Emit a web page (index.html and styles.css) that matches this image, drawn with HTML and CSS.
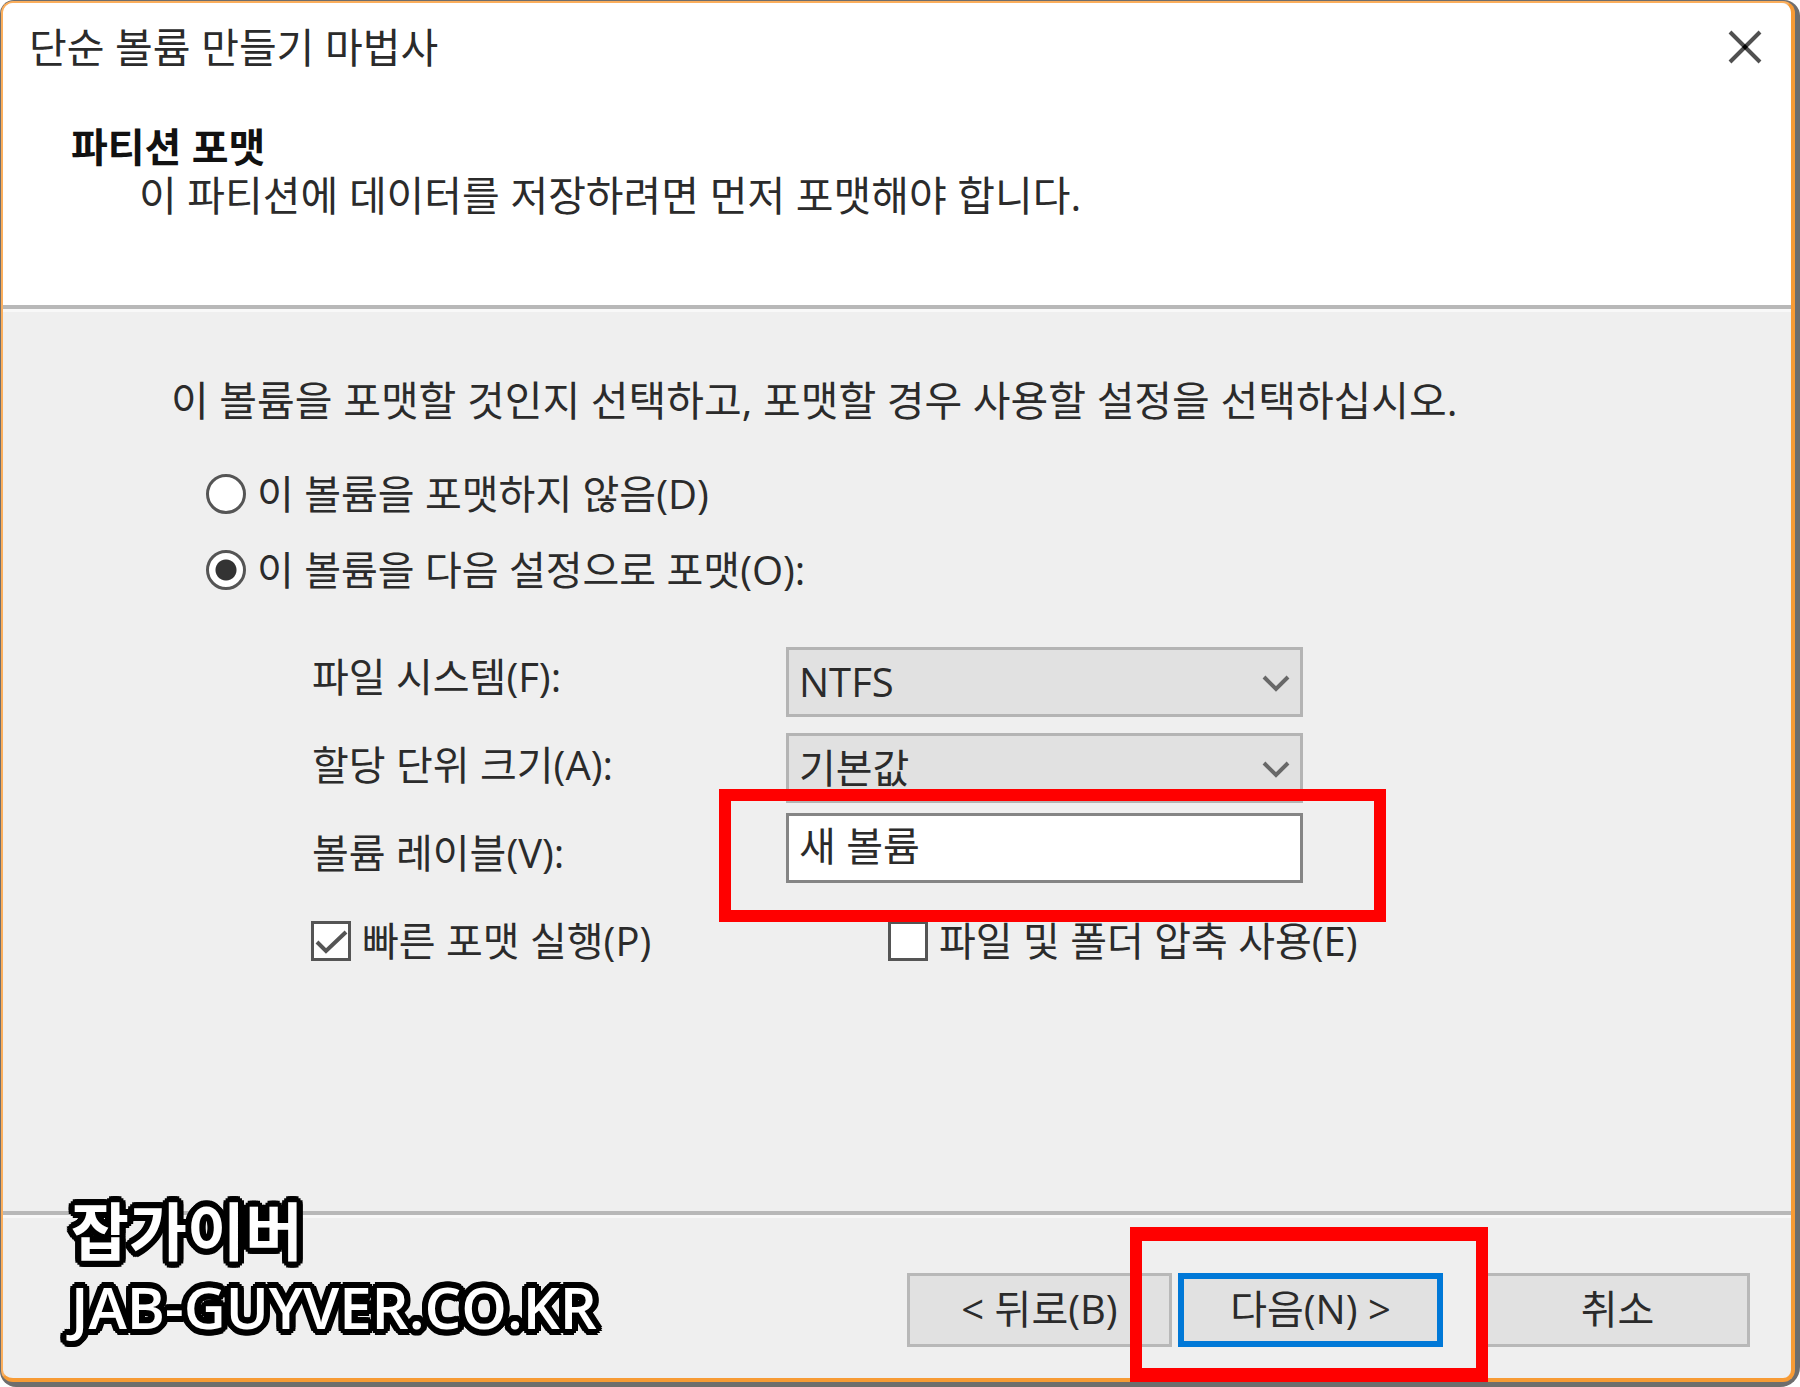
FILE: index.html
```html
<!DOCTYPE html>
<html lang="ko">
<head>
    <meta charset="UTF-8">
    <meta name="viewport" content="width=device-width, initial-scale=1.0">
    <title>단순 볼륨 만들기 마법사</title>
    <link rel="stylesheet" href="styles.css">
</head>
<body>
    <div class="frame">
        <form class="wizard">
            <div class="titlebar">
                <span class="titlebar-text">단순 볼륨 만들기 마법사</span>
                <button type="button" class="close" aria-label="닫기">
                    <svg width="34" height="34" viewBox="0 0 34 34">
                        <path d="M2 2L32 32M32 2L2 32" fill="none" stroke="#505050" stroke-width="4"/>
                        <path d="M14 17l3-3 3 3-3 3z" fill="#000"/>
                    </svg>
                </button>
            </div>

            <header class="header">
                <h1 class="header-title">파티션 포맷</h1>
                <p class="header-text">이 파티션에 데이터를 저장하려면 먼저 포맷해야 합니다.</p>
            </header>

            <main class="content">
                <p class="intro">이 볼륨을 포맷할 것인지 선택하고, 포맷할 경우 사용할 설정을 선택하십시오.</p>

                <div class="choices">
                    <label class="choice"><input type="radio" name="format" class="radio">이 볼륨을 포맷하지 않음(D)</label>
                    <label class="choice"><input type="radio" name="format" class="radio" checked>이 볼륨을 다음 설정으로 포맷(O):</label>
                </div>

                <div class="settings">
                    <div class="labels">
                        <label for="fs">파일 시스템(F):</label>
                        <label for="unit">할당 단위 크기(A):</label>
                        <label for="volume">볼륨 레이블(V):</label>
                    </div>
                    <div class="fields">
                        <div class="field">
                            <select id="fs" class="control">
                                <option>NTFS</option>
                            </select>
                            <svg class="chevron" width="28" height="18" viewBox="0 0 28 18"><path d="M2 2l12 12L26 2" fill="none" stroke="#686868" stroke-width="4"/></svg>
                        </div>
                        <div class="field">
                            <select id="unit" class="control">
                                <option>기본값</option>
                            </select>
                            <svg class="chevron" width="28" height="18" viewBox="0 0 28 18"><path d="M2 2l12 12L26 2" fill="none" stroke="#686868" stroke-width="4"/></svg>
                        </div>
                        <div class="field field-volume">
                            <input type="text" id="volume" class="control" value="새 볼륨">
                            <div class="mark mark-field"></div>
                        </div>
                    </div>
                </div>

                <div class="checks">
                    <label class="choice"><input type="checkbox" class="checkbox" checked>빠른 포맷 실행(P)</label>
                    <label class="choice"><input type="checkbox" class="checkbox">파일 및 폴더 압축 사용(E)</label>
                </div>
            </main>

            <footer class="footer">
                <div class="watermark">
                    <div>잡가이버</div>
                    <div class="watermark-url">JAB-GUYVER.CO.KR</div>
                </div>
                <div class="buttons">
                    <button type="button" class="button">&lt; 뒤로(B)</button>
                    <div class="next">
                        <button type="submit" class="button primary">다음(N) &gt;</button>
                        <div class="mark mark-next"></div>
                    </div>
                    <button type="button" class="button">취소</button>
                </div>
            </footer>
        </form>
    </div>
</body>
</html>
```
FILE: styles.css
```css
* {
    margin: 0;
    padding: 0;
    box-sizing: border-box;
}

body {
    font-family: 'Open Sans', 'Noto Sans CJK KR', sans-serif;
    font-size: 40px;
    line-height: 48px;
    color: #2b2b2b;
    background: #fff;
}

button,
input,
select {
    font: inherit;
    color: inherit;
}

/* window */
.frame {
    display: flex;
    min-height: 100vh;
    padding: 1px 5px 5px 1px;
    background: #6e6e6e;
    border-radius: 14px 16px 20px 16px;
}

.wizard {
    flex: 1;
    display: flex;
    flex-direction: column;
    background: #efefef;
    border: 2px solid #fbae5c;
    border-right: 4px solid #f79b35;
    border-bottom: 4px solid #f79b35;
    border-radius: 12px;
}

.titlebar {
    display: flex;
    align-items: center;
    justify-content: space-between;
    height: 88px;
    padding: 0 29px 0 26px;
    background: #fff;
    border-radius: 10px 10px 0 0;
}

.titlebar-text,
.header-text,
.intro {
    font-size: 41px;
}

.close {
    display: flex;
    padding: 0;
    border: none;
    background: none;
}

.header {
    padding: 32px 68px 86px;
    background: #fff;
    border-bottom: 4px solid #b8b8b8;
}

.header-title {
    font-size: 40px;
    font-weight: bold;
    color: #111;
}

.header-text {
    padding-left: 68px;
}

/* settings */
.content {
    flex: 1;
    padding: 64px 60px 60px 168px;
    border-top: 3px solid #f8f8f8;
}

.choices {
    display: flex;
    flex-direction: column;
    gap: 28px;
    padding: 46px 0 53px 35px;
}

.choice {
    display: flex;
    align-items: center;
    gap: 11px;
}

.radio,
.checkbox {
    appearance: none;
    flex: none;
    width: 40px;
    height: 40px;
    border: 3px solid #555;
    background: #fff;
}

.radio {
    border-radius: 50%;
}

.radio:checked {
    background: radial-gradient(circle, #333 0 10px, #fff 11px);
}

.checkbox:checked {
    background: #fff url("data:image/svg+xml,%3Csvg xmlns='http://www.w3.org/2000/svg' viewBox='0 0 34 34'%3E%3Cpath d='M3 18l9 9L32 8' fill='none' stroke='%23555' stroke-width='4'/%3E%3C/svg%3E");
}

.settings {
    display: grid;
    grid-template-columns: 474px minmax(0, 517px);
    padding: 0 0 34px 141px;
}

.labels {
    display: flex;
    flex-direction: column;
    gap: 40px;
    padding-top: 6px;
}

.fields {
    display: flex;
    flex-direction: column;
    gap: 16px;
}

.field {
    position: relative;
}

.field-volume {
    margin-top: -6px;
}

.control {
    display: block;
    appearance: none;
    width: 100%;
    height: 70px;
    padding: 0 10px;
    border: 3px solid #b4b4b4;
    border-radius: 0;
    background: #e1e1e1;
}

input.control {
    padding-bottom: 8px;
    border-color: #858585;
    background: #fff;
}

.chevron {
    position: absolute;
    top: 28px;
    right: 13px;
    pointer-events: none;
}

.checks {
    display: grid;
    grid-template-columns: 577px auto;
    padding-left: 140px;
}

/* red outlines around the steps to follow */
.mark {
    position: absolute;
    z-index: 1;
    border: 12px solid #f00;
    pointer-events: none;
}

.mark-field {
    inset: -24px -83px -39px -67px;
}

.mark-next {
    inset: -46px -45px -35px -48px;
    border-width: 14px 12px;
}

/* footer */
.footer {
    display: flex;
    align-items: flex-start;
    justify-content: space-between;
    padding: 0 41px 31px 68px;
    border-top: 4px solid #b8b8b8;
    box-shadow: inset 0 3px #f8f8f8;
    border-radius: 0 0 8px 8px;
}

.watermark {
    margin-top: -22px;
    font-size: 63px;
    font-weight: bold;
    line-height: 76px;
    color: #fff;
    text-shadow:
        6px 0 #000, 6px 2px #000, 4px 4px #000, 2px 6px #000,
        0 6px #000, -2px 6px #000, -4px 4px #000, -6px 2px #000,
        -6px 0 #000, -6px -2px #000, -4px -4px #000, -2px -6px #000,
        0 -6px #000, 2px -6px #000, 4px -4px #000, 6px -2px #000,
        3px 0 #000, -3px 0 #000, 0 3px #000, 0 -3px #000;
}

.watermark-url {
    font-size: 58px;
    font-weight: 600;
}

.buttons {
    display: flex;
    padding-top: 58px;
}

.button {
    width: 265px;
    height: 74px;
    padding-bottom: 2px;
    border: 3px solid #b8b8b8;
    background: #e1e1e1;
}

.primary {
    border: 6px solid #0078d7;
}

.next {
    position: relative;
    margin: 0 42px 0 6px;
}
```
